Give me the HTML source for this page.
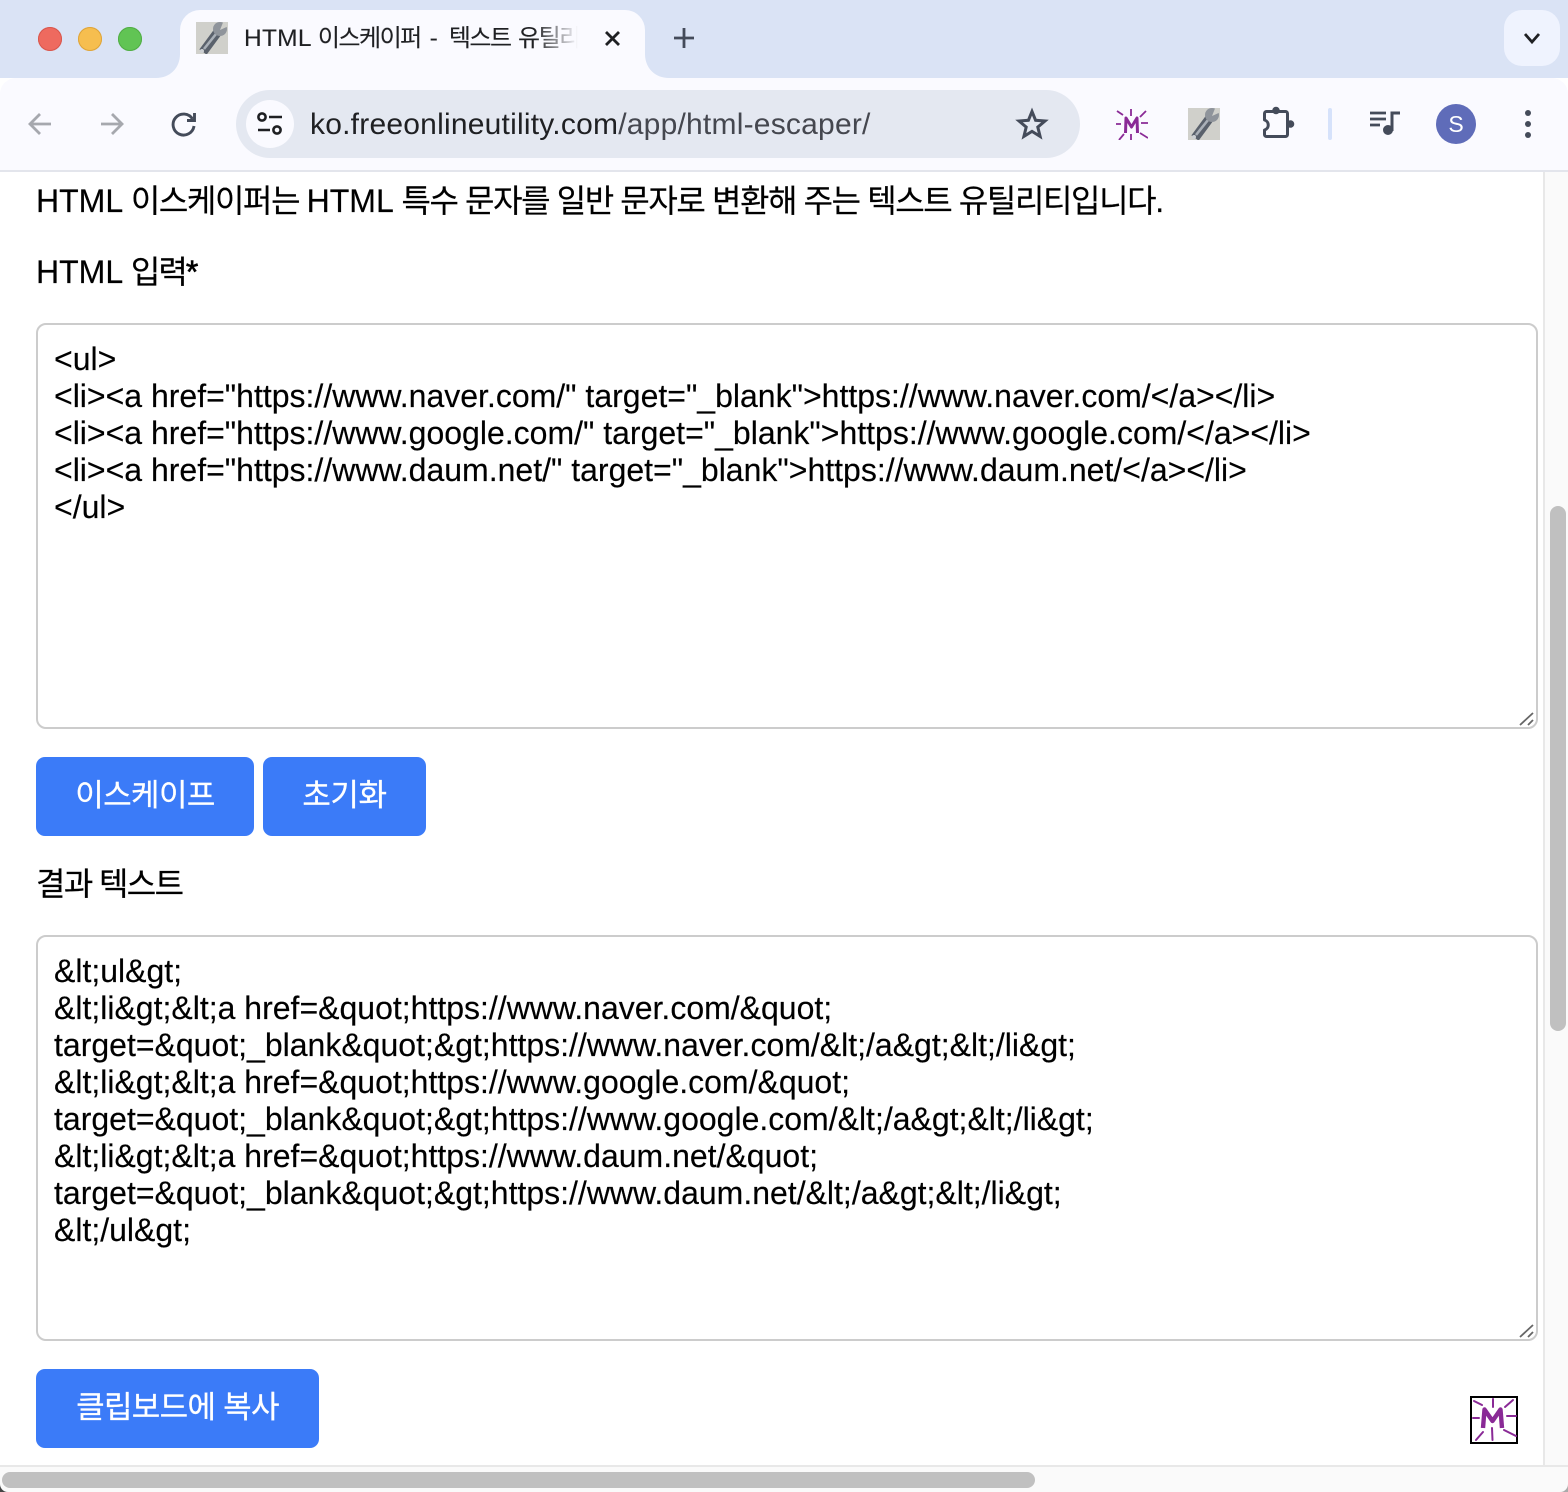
<!DOCTYPE html>
<html lang="ko"><head><meta charset="utf-8"><title>HTML 이스케이퍼</title>
<style>
html,body{margin:0;padding:0;width:1568px;height:1492px;overflow:hidden;background:#fff}
body{position:relative;font-family:"Liberation Sans","Noto Sans CJK KR",sans-serif;color:#000}
.a{position:absolute}
.t{position:absolute;white-space:pre}
.h{-webkit-text-stroke:.2px #000}
.k{letter-spacing:-1.39px}
.ta{position:absolute;left:36px;width:1498px;height:402px;border:2px solid #ccc;border-radius:10px;background:#fff;box-sizing:content-box}
.tx{position:absolute;left:54px;font-size:32px;line-height:37px;white-space:pre;color:#000;-webkit-text-stroke:.15px #000}
.btn{position:absolute;top:757px;height:79px;background:#3b7bf8;border-radius:9px;color:#fff;font-size:31px;line-height:78px;text-align:center;white-space:pre;-webkit-text-stroke:.25px #fff}
svg{position:absolute;overflow:visible}
svg.c{overflow:hidden}
</style></head><body>

<!-- page content -->
<div class="t h" style="left:36px;top:181px;font-size:32px;line-height:40px">HTML <span class="k">이스케이퍼는 </span>HTML <span class="k">특수 문자를 일반 문자로 변환해 주는 텍스트 유틸리티입니다.</span></div>
<div class="t h" style="left:36px;top:252px;font-size:32px;line-height:40px">HTML <span class="k" style="letter-spacing:-1.9px">입력</span><span style="-webkit-text-stroke:.6px #000">*</span></div>

<div class="ta" style="top:323px"></div>
<div class="tx" style="top:341px">&lt;ul&gt;
&lt;li&gt;&lt;a href="https://www.naver.com/" target="_blank"&gt;https://www.naver.com/&lt;/a&gt;&lt;/li&gt;
&lt;li&gt;&lt;a href="https://www.google.com/" target="_blank"&gt;https://www.google.com/&lt;/a&gt;&lt;/li&gt;
&lt;li&gt;&lt;a href="https://www.daum.net/" target="_blank"&gt;https://www.daum.net/&lt;/a&gt;&lt;/li&gt;
&lt;/ul&gt;</div>
<svg style="left:1518px;top:711px" width="18" height="16"><path d="M2 14L15 2M10 14L15 9" stroke="#666" stroke-width="1.8" fill="none"/></svg>

<div class="btn" style="left:36px;width:218px;letter-spacing:-.6px">이스케이프</div>
<div class="btn" style="left:263px;width:163px;letter-spacing:-.4px">초기화</div>

<div class="t h" style="left:36px;top:864px;font-size:32px;line-height:40px;letter-spacing:-1.6px">결과 텍스트</div>

<div class="ta" style="top:935px"></div>
<div class="tx" style="top:953px">&amp;lt;ul&amp;gt;
&amp;lt;li&amp;gt;&amp;lt;a href=&amp;quot;https://www.naver.com/&amp;quot;
target=&amp;quot;_blank&amp;quot;&amp;gt;https://www.naver.com/&amp;lt;/a&amp;gt;&amp;lt;/li&amp;gt;
&amp;lt;li&amp;gt;&amp;lt;a href=&amp;quot;https://www.google.com/&amp;quot;
target=&amp;quot;_blank&amp;quot;&amp;gt;https://www.google.com/&amp;lt;/a&amp;gt;&amp;lt;/li&amp;gt;
&amp;lt;li&amp;gt;&amp;lt;a href=&amp;quot;https://www.daum.net/&amp;quot;
target=&amp;quot;_blank&amp;quot;&amp;gt;https://www.daum.net/&amp;lt;/a&amp;gt;&amp;lt;/li&amp;gt;
&amp;lt;/ul&amp;gt;</div>
<svg style="left:1518px;top:1323px" width="18" height="16"><path d="M2 14L15 2M10 14L15 9" stroke="#666" stroke-width="1.8" fill="none"/></svg>

<div class="btn" style="left:36px;top:1369px;width:283px;letter-spacing:-.7px">클립보드에 복사</div>

<!-- M logo bottom right -->
<svg style="left:1470px;top:1396px" width="48" height="48" viewBox="0 0 48 48">
<rect x="1" y="1" width="46" height="46" fill="#fff" stroke="#000" stroke-width="2"/>
<g stroke="#8a2a96" fill="none" stroke-width="2" stroke-linecap="round">
<path d="M4 5L12 9M23 3V11M43 4L35 11M3 22H9M37 20H46M34 34L46 40M22 32L22.5 44M13 36L6 44"/>
<path d="M13 32L14.5 13.500L22.5 25L30.5 13.500L32 32" stroke-width="4.4" stroke-linejoin="round" stroke-linecap="butt"/>
</g></svg>

<!-- scrollbars -->
<div class="a" style="left:1543px;top:172px;width:25px;height:1320px;background:#fafafa;border-left:2px solid #e8e8e8;box-sizing:border-box"></div>
<div class="a" style="left:1550px;top:506px;width:16px;height:525px;background:#c0c0c0;border-radius:8px"></div>
<div class="a" style="left:0;top:1465px;width:1568px;height:27px;background:#fafafa;border-top:2px solid #e8e8e8;box-sizing:border-box"></div>
<div class="a" style="left:2px;top:1472px;width:1033px;height:16px;background:#c0c0c0;border-radius:8px"></div>
<svg style="left:0;top:1484px" width="8" height="8"><path d="M0 0V8H8C3 8 0 4 0 0Z" fill="#444"/></svg>
<svg style="left:1560px;top:1484px" width="8" height="8"><path d="M8 0V8H0C5 8 8 4 8 0Z" fill="#aaa"/></svg>

<!-- browser chrome -->
<div class="a" style="left:0;top:0;width:1568px;height:78px;background:#dae3f5"></div>
<div class="a" style="left:0;top:78px;width:1568px;height:93px;background:#fafaff;border-radius:16px 16px 0 0"></div>
<div class="a" style="left:0;top:170px;width:1568px;height:2px;background:#e3e5ec"></div>
<!-- tab -->
<div class="a" style="left:180px;top:10px;width:465px;height:70px;background:#fafaff;border-radius:20px 20px 0 0"></div>
<svg style="left:156px;top:54px" width="24" height="24"><path d="M24 0V24H0C14 24 24 14 24 0Z" fill="#fafaff"/></svg>
<svg style="left:645px;top:54px" width="24" height="24"><path d="M0 0V24H24C10 24 0 14 0 0Z" fill="#fafaff"/></svg>
<!-- traffic lights -->
<div class="a" style="left:38px;top:27px;width:24px;height:24px;border-radius:50%;background:#ee6a5f;box-shadow:inset 0 0 0 1px #d8574d"></div>
<div class="a" style="left:78px;top:27px;width:24px;height:24px;border-radius:50%;background:#f6be4f;box-shadow:inset 0 0 0 1px #dea43a"></div>
<div class="a" style="left:118px;top:27px;width:24px;height:24px;border-radius:50%;background:#61c454;box-shadow:inset 0 0 0 1px #51ad45"></div>
<!-- favicon -->
<svg class="c" style="left:196px;top:22px" width="32" height="32" viewBox="0 0 32 32">
<rect width="32" height="32" fill="#d0d0cb"/>
<path d="M7 30L21 11" stroke="#5a616c" stroke-width="9"/><path d="M8 27L20 12" stroke="#aab0b8" stroke-width="2.6"/>
<circle cx="24" cy="7" r="7" fill="#8f949b"/><path d="M24 8L28 -2L35 3Z" fill="#d0d0cb"/>
<circle cx="6" cy="29" r="2" fill="#cdd0d4"/></svg>
<div class="a" style="left:244px;top:20px;width:334px;height:40px;overflow:hidden;white-space:pre;font-size:24.5px;line-height:38px;color:#1f2023;letter-spacing:.25px;-webkit-text-stroke:.12px #1f2023;-webkit-mask-image:linear-gradient(90deg,#000 290px,transparent 334px);mask-image:linear-gradient(90deg,#000 290px,transparent 334px)">HTML <span style="font-size:24px;letter-spacing:-1.5px">이스케이퍼</span><span style="letter-spacing:2.1px"> - </span><span style="font-size:24px;letter-spacing:-1.5px">텍스트</span><span style="letter-spacing:.6px"> </span><span style="font-size:24px;letter-spacing:-1.5px">유틸리티</span></div>
<svg style="left:604px;top:30px" width="17" height="17"><path d="M2 2L15 15M15 2L2 15" stroke="#1f2023" stroke-width="2.8" fill="none"/></svg>
<svg style="left:673px;top:27px" width="22" height="22"><path d="M11 1V21M1 11H21" stroke="#444b5a" stroke-width="2.8" fill="none"/></svg>
<div class="a" style="left:1504px;top:10px;width:56px;height:56px;border-radius:18px;background:#eff3fe"></div>
<svg style="left:1523px;top:32px" width="18" height="13"><path d="M2 2L9 10L16 2" stroke="#1f2023" stroke-width="2.8" fill="none"/></svg>

<!-- nav -->
<svg style="left:27px;top:111px" width="26" height="26" viewBox="0 0 26 26"><path d="M24 13H3M13 3L3 13L13 23" stroke="#a6a8ae" stroke-width="2.8" fill="none"/></svg>
<svg style="left:99px;top:111px" width="26" height="26" viewBox="0 0 26 26"><path d="M2 13H23M13 3L23 13L13 23" stroke="#a6a8ae" stroke-width="2.8" fill="none"/></svg>
<svg style="left:170px;top:110px" width="28" height="28" viewBox="0 0 28 28"><path d="M22.5 9A10.5 10.5 0 1 0 24 16" stroke="#444b5a" stroke-width="2.9" fill="none"/><path d="M24.5 3V10.5H17" stroke="#444b5a" stroke-width="2.9" fill="none"/></svg>
<div class="a" style="left:236px;top:90px;width:844px;height:68px;border-radius:34px;background:#e4e8f1"></div>
<div class="a" style="left:246px;top:100px;width:48px;height:48px;border-radius:50%;background:#fafaff"></div>
<svg style="left:256px;top:111px" width="28" height="26" viewBox="0 0 28 26"><g stroke="#1f2023" stroke-width="2.6" fill="none"><circle cx="6" cy="6" r="3.6"/><path d="M13 6H26M2 19H14"/><circle cx="21" cy="19" r="3.6"/></g></svg>
<div class="t" style="left:310px;top:105px;font-size:30px;line-height:40px;color:#1f2023;letter-spacing:.22px">ko.freeonlineutility.com<span style="color:#45474f">/app/html-escaper/</span></div>
<svg style="left:1016px;top:108px" width="32" height="32" viewBox="0 0 32 32"><path d="M16 3.5L19.6 12.3L29 13L21.8 19.1L24.1 28.4L16 23.4L7.9 28.4L10.2 19.1L3 13L12.4 12.3Z" stroke="#444b5a" stroke-width="3" fill="none" stroke-linejoin="miter"/></svg>

<!-- M ext -->
<svg class="c" style="left:1116px;top:108px" width="32" height="32" viewBox="0 0 32 32"><g stroke="#8a2a96" stroke-width="1.8" fill="none"><path d="M1 3L7 7M15 1V8M30 3L24 9M0 16H5M25 15H32M3 32L8 26M15 26V33M24 25L32 30"/><path d="M9.500 25L10 10L15.500 19L21 10L21.500 25" stroke-width="3" stroke-linejoin="round"/></g></svg>
<!-- wrench ext -->
<svg class="c" style="left:1188px;top:108px" width="32" height="32" viewBox="0 0 32 32">
<rect width="32" height="32" fill="#d0d0cb"/>
<path d="M7 30L21 11" stroke="#5a616c" stroke-width="9"/><path d="M8 27L20 12" stroke="#aab0b8" stroke-width="2.6"/>
<circle cx="24" cy="7" r="7" fill="#8f949b"/><path d="M24 8L28 -2L35 3Z" fill="#d0d0cb"/>
<circle cx="6" cy="29" r="2" fill="#cdd0d4"/></svg>
<!-- puzzle -->
<svg style="left:1260px;top:106px" width="36" height="34" viewBox="0 0 36 34"><g fill="#444b5a"><circle cx="16" cy="4.5" r="3.8"/><circle cx="30.5" cy="18" r="3.8"/></g><path d="M6.5 5.5H25.5A2 2 0 0 1 27.5 7.5V28.5A2 2 0 0 1 25.5 30.5H6.5A2 2 0 0 1 4.500 28.500V24C9.500 22.500 9.500 15.500 4.500 14V7.500A2 2 0 0 1 6.500 5.500Z" stroke="#444b5a" stroke-width="3" fill="none" stroke-linejoin="round"/></svg>
<div class="a" style="left:1328px;top:108px;width:4px;height:32px;border-radius:2px;background:#d6e2fb"></div>
<!-- media -->
<svg style="left:1368px;top:110px" width="34" height="26" viewBox="0 0 34 26"><path d="M2 3H18M2 9H18M2 15H12" stroke="#444b5a" stroke-width="2.8" fill="none"/><path d="M24 21V3H32" stroke="#444b5a" stroke-width="3" fill="none"/><circle cx="20" cy="20" r="5" fill="#444b5a"/></svg>
<!-- avatar -->
<div class="a" style="left:1436px;top:104px;width:40px;height:40px;border-radius:50%;background:#5f6cb9;color:#fff;font-size:23px;line-height:41px;text-align:center">S</div>
<!-- menu -->
<svg style="left:1522px;top:108px" width="12" height="32"><circle cx="6" cy="5" r="3" fill="#444b5a"/><circle cx="6" cy="16" r="3" fill="#444b5a"/><circle cx="6" cy="27" r="3" fill="#444b5a"/></svg>
</body></html>
